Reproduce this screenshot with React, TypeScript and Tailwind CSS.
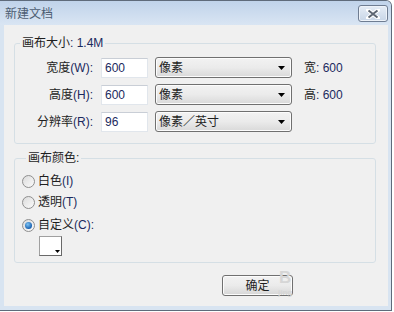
import React from 'react';

const Arrow = () => (
  <svg width="7" height="4" viewBox="0 0 7 4" className="block">
    <path d="M0 0 H7 L3.5 4 Z" fill="#000" />
  </svg>
);

const Select = ({ value }: { value: string }) => (
  <div className="w-[137px] h-[21px] flex items-center justify-between pl-[3px] pr-[6px] rounded-[3px] border border-[#707070] bg-gradient-to-b from-[#f2f2f2] via-[#ebebeb] to-[#d9d9d9] shadow-[inset_0_0_0_1px_#fcfcfc]">
    <span className="leading-none">{value}</span>
    <Arrow />
  </div>
);

const Row = ({ label, hot, value, unit, extra }: { label: string; hot: string; value: string; unit: string; extra?: string }) => (
  <div className="flex items-center h-[21px]">
    <div className="w-[77px] text-right leading-none whitespace-nowrap">
      {label}
      <span className="text-[#1b2a5e]">({hot}):</span>
    </div>
    <div className="ml-[8px] w-[47px] h-[20px] flex items-center pl-[3px] bg-white border border-[#e1e6ec] border-t-[#c9ced6] text-[#1b2a5e]">
      {value}
    </div>
    <div className="ml-[7px]">
      <Select value={unit} />
    </div>
    {extra && (
      <div className="ml-[12px] leading-none whitespace-nowrap">
        {extra}
        <span className="text-[#1b2a5e]">: 600</span>
      </div>
    )}
  </div>
);

const Radio = ({ checked, label, hot, tail = '' }: { checked?: boolean; label: string; hot: string; tail?: string }) => (
  <div className="flex items-center h-[20px]">
    <div className="w-[13px] h-[13px] rounded-full border border-[#8f8f8f] bg-gradient-to-br from-[#dcdcdc] to-[#fbfbfb] flex items-center justify-center">
      {checked && (
        <div className="w-[7px] h-[7px] rounded-full bg-[radial-gradient(circle_at_40%_35%,#7ec3f4,#1a62b0_70%)]" />
      )}
    </div>
    <span className="ml-[3px] leading-none whitespace-nowrap">
      {label}
      <span className="text-[#1b2a5e]">({hot}){tail}</span>
    </span>
  </div>
);

export default function App() {
  return (
    <div className="w-[394px] h-[312px] bg-white font-['Tahoma','Liberation_Sans','Noto_Sans_CJK_SC',sans-serif] text-[12px] text-[#1e1e1e]">
      <div className="w-[392px] h-[311px] flex flex-col bg-[#d8e4f1] border-t border-r border-b border-[#5f6b7b] rounded-tr-[6px] overflow-hidden">
        {/* Title bar */}
        <div className="h-[24px] flex items-start justify-between pl-[5px] pr-[3px] bg-gradient-to-b from-[#c0d3ea] to-[#d9e5f3]">
          <span className="mt-[5px] leading-[16px] text-[#4d5d72]">新建文档</span>
          <div className="mt-[4px] w-[30px] h-[17px] rounded-[3px] border border-[#6f7d92] bg-gradient-to-b from-[#e6edf6] to-[#c8d6e7] flex items-center justify-center shadow-[inset_0_0_0_1px_#eef3f9]">
            <svg width="14" height="10" viewBox="0 0 14 10">
              <path d="M2 1 L12 9 M12 1 L2 9" stroke="#fff" strokeWidth="4" strokeLinecap="round" />
              <path d="M2.5 1.5 L11.5 8.5 M11.5 1.5 L2.5 8.5" stroke="#5c6572" strokeWidth="2" />
            </svg>
          </div>
        </div>

        {/* Client area */}
        <div className="flex-1 ml-[4px] mr-[3px] mb-[4px] bg-[#f0f0f0] relative pt-[10px]">
          <fieldset className="ml-[10px] w-[362px] border border-[#d5dfe5] rounded-[3px] pl-[1px] pb-[11px]">
            <legend className="ml-[4px] px-[2px] leading-[16px]">
              画布大小<span className="text-[#1b2a5e]">: 1.4M</span>
            </legend>
            <div className="mt-[6px] flex flex-col gap-[6px]">
              <Row label="宽度" hot="W" value="600" unit="像素" extra="宽" />
              <Row label="高度" hot="H" value="600" unit="像素" extra="高" />
              <Row label="分辨率" hot="R" value="96" unit="像素／英寸" />
            </div>
          </fieldset>

          <fieldset className="mt-[6px] ml-[10px] w-[362px] border border-[#d5dfe5] rounded-[3px] pl-[7px] pb-[6px]">
            <legend className="ml-[4px] px-[2px] leading-[16px]">画布颜色:</legend>
            <div className="mt-[5px] flex flex-col gap-[1px]">
              <Radio label="白色" hot="I" />
              <Radio label="透明" hot="T" />
              <div className="mt-[2px]">
                <Radio checked label="自定义" hot="C" tail=":" />
              </div>
            </div>
            <div className="mt-[1px] ml-[17px] w-[23px] h-[20px] relative bg-white border border-[#a0a0a0] border-r-[#696969] border-b-[#696969]">
              <div className="absolute right-[1px] bottom-[2px]">
                <svg width="5" height="3" viewBox="0 0 5 3" className="block">
                  <path d="M0 0 H5 L2.5 3 Z" fill="#000" />
                </svg>
              </div>
            </div>
          </fieldset>

          <div className="mt-[12px] ml-[218px] w-[71px] h-[21px] rounded-[3px] border border-[#707070] bg-gradient-to-b from-[#f2f2f2] via-[#ebebeb] to-[#d6d6d6] shadow-[inset_0_0_0_1px_#fcfcfc] flex items-center justify-center">
            <span className="leading-none">确定</span>
          </div>

          {/* watermark */}
          <div className="absolute left-[274px] top-[244px] flex flex-col items-center leading-none text-[#d6d6d6] pointer-events-none">
            <span className="text-[17px] font-bold">B</span>
            <span className="mt-[3px] text-[8px] font-bold">jing</span>
          </div>
        </div>
      </div>
    </div>
  );
}
